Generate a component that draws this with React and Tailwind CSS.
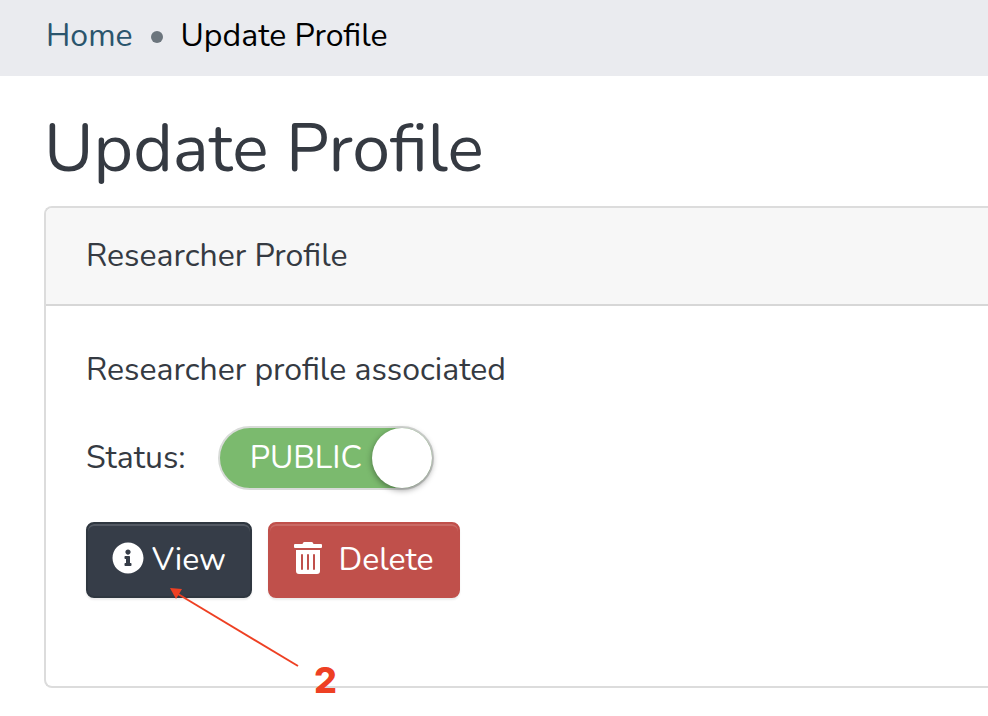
import { useState } from "react";
import { FaInfoCircle, FaTrashAlt } from "react-icons/fa";

function Breadcrumb() {
  return (
    <nav aria-label="Breadcrumb" className="h-[76px] bg-[#eaebef] px-[46px] pt-3">
      <ol className="flex items-center text-[32px] leading-[48px]">
        <li>
          <a href="#home" className="text-[#2b556d]">Home</a>
        </li>
        <li aria-hidden="true" className="mx-[18px] mt-[2px] size-3 rounded-full bg-[#6c757d]" />
        <li aria-current="page" className="text-black">Update Profile</li>
      </ol>
    </nav>
  );
}

function StatusSwitch() {
  const [isPublic, setIsPublic] = useState(true);
  return (
    <div className="flex items-center gap-8">
      <label htmlFor="status">Status:</label>
      <label
        htmlFor="status"
        className="flex h-16 w-[216px] items-center justify-between rounded-full border-2 border-[#d8dbd8] bg-[#7bba6e] pl-[30px] text-white"
      >
        <input
          id="status"
          type="checkbox"
          role="switch"
          className="sr-only"
          checked={isPublic}
          onChange={(e) => setIsPublic(e.target.checked)}
        />
        <span>PUBLIC</span>
        <span className="size-[60px] rounded-full bg-white shadow-[0_2px_6px_rgba(0,0,0,0.4)]" />
      </label>
    </div>
  );
}

function Annotation() {
  return (
    <div className="pointer-events-none absolute top-[66px] left-[82px] text-[#ee4023]">
      <svg width="132" height="80" viewBox="0 0 132 80" fill="none" aria-hidden="true">
        <path d="M10 6 130 78" stroke="currentColor" strokeWidth="2" />
        <path d="M2 0 14 1 8 11Z" fill="currentColor" />
      </svg>
      <span className="absolute top-[72px] left-[146px] font-['Inter','Liberation_Sans',sans-serif] text-[36px] leading-[40px] font-extrabold">
        2
      </span>
    </div>
  );
}

export default function App() {
  return (
    <div className="overflow-x-hidden bg-white pb-7 font-['Nunito','Lato',sans-serif] text-[32px] leading-[48px] text-[#353a42]">
      <Breadcrumb />
      <main className="pt-8 pl-11">
        <h1 className="text-[68px] leading-[82px]">Update Profile</h1>
        <section className="mt-4 rounded-l-lg border-2 border-r-0 border-[#dcdcdc]">
          <h2 className="rounded-tl-md border-b-2 border-[#d7d7d7] bg-[#f7f7f7] px-10 py-6">
            Researcher Profile
          </h2>
          <div className="px-10 pt-10 pb-[88px]">
            <p className="mb-8">Researcher profile associated</p>
            <StatusSwitch />
            <div className="relative mt-8 flex gap-4">
              <button
                type="button"
                className="flex h-[76px] w-[166px] items-center justify-center gap-2 rounded-lg border-2 border-[#2f3740] bg-[#363d48] text-white shadow-[inset_0_2px_0_rgba(255,255,255,0.15),0_2px_2px_rgba(0,0,0,0.08)]"
              >
                <FaInfoCircle className="mb-1 size-8" />
                View
              </button>
              <button
                type="button"
                className="flex h-[76px] w-[192px] items-center justify-center gap-4 rounded-lg border-2 border-[#c0504b] bg-[#c0504b] text-white shadow-[inset_0_2px_0_rgba(255,255,255,0.15),0_2px_2px_rgba(0,0,0,0.08)]"
              >
                <FaTrashAlt className="mb-1 h-8 w-7" />
                Delete
              </button>
              <Annotation />
            </div>
          </div>
        </section>
      </main>
    </div>
  );
}
